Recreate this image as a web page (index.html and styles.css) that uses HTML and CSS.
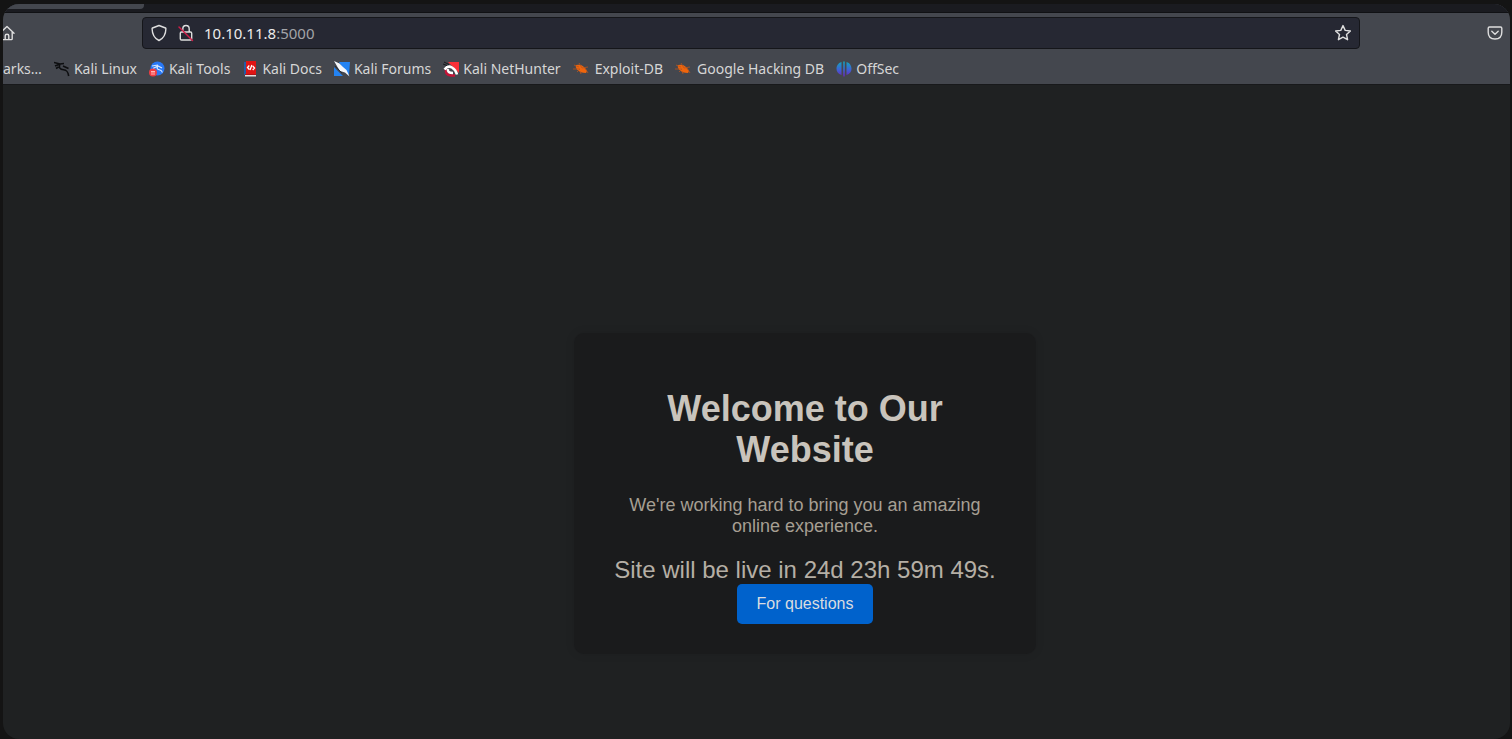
FILE: index.html
```html
<!DOCTYPE html>
<html lang="en">
<head>
<meta charset="utf-8">
<title>Under Construction</title>
<link rel="stylesheet" href="styles.css">
</head>
<body>
<div class="window">
  <header class="chrome">
    <div class="tabstrip"><div class="tab"></div></div>
    <div class="toolbar">
      <button class="tool home" aria-label="Home"><svg width="16" height="16" viewBox="0 0 16 16"><path d="M1 8.2 8 1.5l7 6.7M2.8 7v6.8q0 .8.8.8h8.800q.8 0 .8-.8V7M6.200 14.500v-3.700q0-1.600 1.800-1.600t1.800 1.600v3.700"/></svg></button>
      <div class="urlbar">
        <svg width="18" height="18" viewBox="0 0 18 18"><path d="M9 1.500 15.500 4q.4.200.4.700C15.800 10 13.500 14.300 9 16.500 4.500 14.300 2.200 10 2.100 4.700q0-.5.4-.7z"/></svg>
        <svg width="16" height="18" viewBox="0 0 16 18"><path d="M4.800 8V5q0-3.500 3.200-3.500T11.200 5v3M3.500 8h9q1.200 0 1.200 1.200v5.600q0 1.200-1.200 1.200h-9q-1.200 0-1.200-1.200V9.200Q2.300 8 3.500 8z"/><path class="slash" d="m1 3 13.500 13.500"/></svg>
        <div class="address"><span class="host">10.10.11.8</span><span class="port">:5000</span></div>
        <button class="tool" aria-label="Bookmark this page"><svg width="18" height="18" viewBox="0 0 18 18"><path d="m9 1.600 2.200 4.800 5.200.6-3.900 3.500 1.100 5.200L9 13.100l-4.600 2.600 1.100-5.200L1.600 7l5.200-.6z"/></svg></button>
      </div>
      <button class="tool pocket" aria-label="Save to Pocket"><svg width="16" height="16" viewBox="0 0 16 16"><path d="M2.500 2h11q1.300 0 1.300 1.300v4q0 6.700-6.800 6.700T1.200 7.300v-4Q1.200 2 2.500 2zM4.800 6.300 8 9.300l3.200-3"/></svg></button>
    </div>
    <nav class="bookmarks">
      <a href="#" class="cut"><span>arks…</span></a>
      <a href="#"><svg width="16" height="16" viewBox="0 0 16 16"><path fill="none" stroke="#0d0e10" stroke-width="1.600" d="M0 1.500 6 3l4-.5M1 5l5-2M6 3C4.500 6.500 6 8.500 9.500 8.700s4.500 2 5.200 6.300M9 5l5.500 2.500M4.500 6 2 7.500"/></svg><span>Kali Linux</span></a>
      <a href="#"><svg width="16" height="16" viewBox="0 0 16 16"><circle cx="8.500" cy="7.500" r="7" fill="#2878f6"/><path fill="none" stroke="#d6e7ff" stroke-width="1.200" d="M3 5 9 4M4 7.500 9 5l4 2M9 5c-2 3 0 3.500 2 4s2 1 2.300 2.500"/><circle cx="4" cy="11.500" r="4" fill="#f03c42"/><path stroke="#ffb7b7" fill="none" d="M2 10.500h4M3 11v3M5 11v3"/></svg><span>Kali Tools</span></a>
      <a href="#"><svg width="16" height="16" viewBox="0 0 16 16"><path fill="#255ba6" d="M2 1h2v13H2z"/><path fill="#e01414" d="M4 0h10v13H4z"/><path fill="#e4dcdc" d="M3 14h11v1.500H3z"/><path fill="#b51218" d="M3 13h11v1H3z"/><path fill="none" stroke="#fff" stroke-width="1.300" d="M7.300 4.500 5.500 6.500l1.800 2M10.700 5l1.800 2-1.800 2M9.900 4 8 9"/></svg><span>Kali Docs</span></a>
      <a href="#"><svg width="16" height="16" viewBox="0 0 16 16"><path fill="#2383f2" d="M5 1h11l-1 13-6-6zM0 6l9 9H0z"/><path fill="#f3f6fa" d="m0 0 5.500 2.500L9 6l3.500 3 3 6.500-4.500-4L6 10 3.500 6z"/><path stroke="#1b2634" stroke-width=".8" d="m1 5 7 7"/></svg><span>Kali Forums</span></a>
      <a href="#"><svg width="16" height="16" viewBox="0 0 16 16"><path fill="#fa3038" d="M5 1h11v11z"/><path fill="none" stroke="#c51438" stroke-width="2.500" d="M3 8q-1 6 5 6.500h4"/><path fill="none" stroke="#fff" stroke-width="2.500" d="M1.500 8.500Q5 4 9 6.500t5 7M5 8q-1 4 5 4"/><path stroke="#17191d" d="m0 3 4 1.500M1 1l5 2.500"/></svg><span>Kali NetHunter</span></a>
      <a href="#" class="exploit"><svg width="16" height="16" viewBox="0 0 16 16"><path fill="#ef650c" d="M3 4q5-1 8 2l3 4-1 2q-6 0-9-3.500Q2 6 3 4z"/><path fill="none" stroke="#b9561e" stroke-width=".8" d="m1 4 5 2M6 2l3 5 6-1M0 8h7l-3 3M12 7l3 5M7 10l1 3"/></svg><span>Exploit-DB</span></a>
      <a href="#" class="exploit"><svg width="16" height="16" viewBox="0 0 16 16"><path fill="#ef650c" d="M3 4q5-1 8 2l3 4-1 2q-6 0-9-3.500Q2 6 3 4z"/><path fill="none" stroke="#b9561e" stroke-width=".8" d="m1 4 5 2M6 2l3 5 6-1M0 8h7l-3 3M12 7l3 5M7 10l1 3"/></svg><span>Google Hacking DB</span></a>
      <a href="#"><svg width="16" height="16" viewBox="0 0 16 16"><defs><linearGradient id="os" x2="0" y2="1"><stop stop-color="#12a5bd"/><stop offset=".55" stop-color="#3d62d4"/><stop offset="1" stop-color="#6a27b8"/></linearGradient></defs><path fill="url(#os)" d="M5.500 1v13C2 13 .5 10.500.5 7.800S2 2 5.500 1zM7.200 .5h1.600v15H7.200zM10.500 1c3.500 1 5 4 5 6.800s-1.500 5.200-5 6.200z"/></svg><span>OffSec</span></a>
    </nav>
  </header>
  <main class="page">
    <section class="card">
      <h1>Welcome to Our Website</h1>
      <p>We're working hard to bring you an amazing online experience.</p>
      <div class="countdown">Site will be live in 24d 23h 59m 49s.</div>
      <button class="cta">For questions</button>
    </section>
  </main>
</div>
</body>
</html>
```
FILE: styles.css
```css
* { box-sizing: border-box; }
body {
  margin: 0;
  min-height: 100vh;
  padding: 4px 2px 0 3px;
  display: flex;
  background: #141414;
  font-family: "Noto Sans", sans-serif;
}
.window {
  flex: 1;
  min-width: 0;
  display: flex;
  flex-direction: column;
  overflow: hidden;
  border-radius: 16px;
  background: #1f2122;
}
.chrome {
  background: #44474e;
  color: #dedede;
  border-bottom: 1px solid #18191b;
}
.tabstrip {
  height: 9px;
  background: #1a1b20;
  border-bottom: 1px solid #101114;
}
.tab {
  width: 141px;
  height: 5px;
  background: #44474e;
  border-radius: 0 0 4px 0;
}
.toolbar {
  display: flex;
  align-items: center;
  height: 40px;
}
.tool {
  display: flex;
  padding: 0;
  border: 0;
  background: none;
  color: inherit;
}
.toolbar svg {
  flex: none;
  fill: none;
  stroke: #dedede;
  stroke-width: 1.400;
  stroke-linejoin: round;
  stroke-linecap: round;
}
.toolbar .slash { stroke: #d01c48; }
.home { margin-left: -4px; }
.urlbar {
  flex: 1;
  display: flex;
  align-items: center;
  gap: 10px;
  height: 32px;
  margin: 0 127px;
  padding: 0 7px;
  border: 1px solid #15161a;
  border-radius: 4px;
  background: #262833;
}
.address {
  flex: 1;
  font-size: 15px;
  line-height: 20px;
}
.host { color: #ececec; }
.port { color: #a3a4a8; }
.pocket { margin-right: 7px; }
.bookmarks {
  display: flex;
  align-items: center;
  gap: 12px;
  height: 31px;
  white-space: nowrap;
}
.bookmarks a {
  display: flex;
  align-items: center;
  gap: 4px;
  color: #d6d6d6;
  font-size: 14px;
  line-height: 20px;
  text-decoration: none;
}
.bookmarks .exploit { gap: 6px; }
.page {
  flex: 1;
  padding: 248px 0 85px 97px;
  font-family: "Liberation Sans", Arial, sans-serif;
  text-align: center;
}
.card {
  max-width: 462px;
  margin: 0 auto;
  padding: 30px;
  border-radius: 10px;
  background: #1a1b1c;
  box-shadow: 0 0 10px rgba(0, 0, 0, 0.1);
}
h1 {
  margin: 25px 0;
  color: #c9c4bc;
  font-size: 36px;
  line-height: 41px;
}
p {
  margin: 0 0 19px;
  color: #a69f93;
  font-size: 18px;
  line-height: 21px;
}
.countdown {
  color: #b5afa5;
  font-size: 24px;
  line-height: 28px;
}
.cta {
  display: block;
  margin: 0 auto;
  padding: 10px 20px;
  border: 0;
  border-radius: 5px;
  background: #0062cc;
  color: #d9dce0;
  font-family: inherit;
  font-size: 16px;
  line-height: 20px;
}
```
